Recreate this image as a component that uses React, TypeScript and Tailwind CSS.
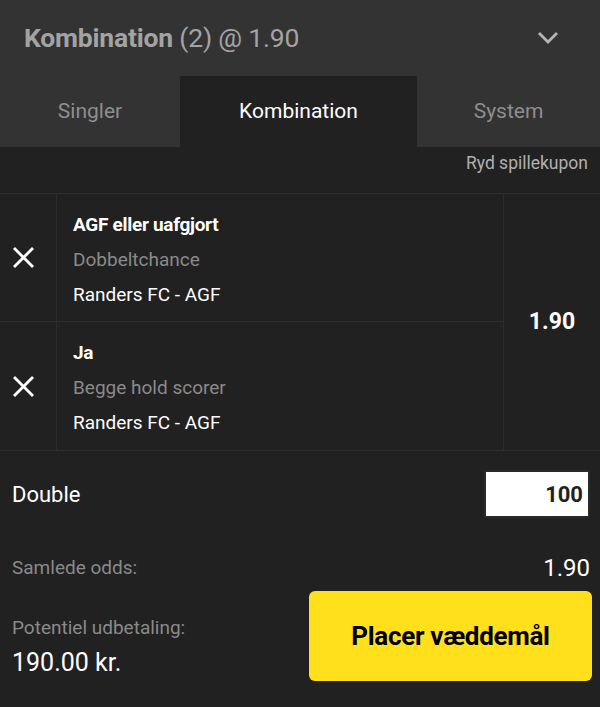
type Leg = {
  pick: string;
  market: string;
  event: string;
};

const legs: Leg[] = [
  {pick: "AGF eller uafgjort", market: "Dobbeltchance", event: "Randers FC - AGF"},
  {pick: "Ja", market: "Begge hold scorer", event: "Randers FC - AGF"},
];

function CloseIcon() {
  return (
    <svg width="23" height="23" viewBox="0 0 23 23" fill="none" stroke="#ffffff" strokeWidth="2.8">
      <line x1="2" y1="2" x2="21" y2="21" />
      <line x1="21" y1="2" x2="2" y2="21" />
    </svg>
  );
}

function LegRow({leg, last}: {leg: Leg; last: boolean}) {
  return (
    <div className={`flex h-[128px] ${last ? "" : "border-b border-[#2d2d2d]"}`}>
      <div className="w-[57px] flex items-center justify-center pr-[9px] border-r border-[#2d2d2d]">
        <CloseIcon />
      </div>
      <div className="flex-1 pl-4 pt-[3px] flex flex-col justify-center text-[19px] leading-[35px]">
        <div className="font-bold text-white tracking-[-0.3px]">{leg.pick}</div>
        <div className="text-[#8a8a8a]">{leg.market}</div>
        <div className="text-white">{leg.event}</div>
      </div>
    </div>
  );
}

export default function App() {
  return (
    <div
      className="w-[600px] h-[707px] bg-[#212121] overflow-hidden"
      style={{fontFamily: "Roboto, 'Liberation Sans', sans-serif"}}
    >
      <div className="bg-[#333333]">
        <div className="h-[76px] pl-6 pr-[41px] flex items-center justify-between">
          <div className="text-[26.5px] text-[#a3a3a3] tracking-[-0.2px]">
            <span className="font-bold">Kombination</span> (2) @ 1.90
          </div>
          <svg width="22" height="14" viewBox="0 0 22 14" fill="none" stroke="#b5b5b5" strokeWidth="2.8">
            <polyline points="2,2 11,11 20,2" />
          </svg>
        </div>
        <div className="flex h-[71px] text-[21px]">
          <div className="w-[180px] flex items-center justify-center text-[#8e8e8e]">Singler</div>
          <div className="w-[237px] flex items-center justify-center bg-[#212121] text-white">
            Kombination
          </div>
          <div className="flex-1 flex items-center justify-center text-[#8e8e8e]">System</div>
        </div>
      </div>

      <div className="h-[47px] pr-3 pt-[3px] flex justify-end border-b border-[#2d2d2d]">
        <span className="text-[17.5px] text-[#b0b0b0]">Ryd spillekupon</span>
      </div>

      <div className="flex border-b border-[#2d2d2d]">
        <div className="flex-1">
          {legs.map((leg, i) => (
            <LegRow key={i} leg={leg} last={i === legs.length - 1} />
          ))}
        </div>
        <div className="w-[97px] border-l border-[#2d2d2d] flex items-center justify-center">
          <span className="text-[23px] font-bold text-white">1.90</span>
        </div>
      </div>

      <div className="px-3 pt-[21px]">
        <div className="flex items-center justify-between h-[44px]">
          <span className="text-[22px] text-white">Double</span>
          <div className="w-[102px] h-[44px] bg-white outline-2 outline-[#2a2a2a] flex items-center justify-end pr-[5px]">
            <span className="text-[22px] font-bold text-[#212121]">100</span>
          </div>
        </div>

        <div className="mt-[37px] flex items-center justify-between h-[30px]">
          <span className="text-[19px] text-[#8a8a8a]">Samlede odds:</span>
          <span className="text-[24px] text-white -mr-[2px]">1.90</span>
        </div>

        <div className="mt-2 flex justify-between items-start">
          <div className="pt-[25px]">
            <div className="text-[19px] leading-[24px] text-[#8a8a8a]">Potentiel udbetaling:</div>
            <div className="mt-2 text-[25px] leading-[30px] text-white">190.00 kr.</div>
          </div>
          <button className="w-[283px] h-[90px] -mr-1 rounded-md bg-[#ffe01b] text-black text-[26px] font-bold tracking-[-0.3px]">
            Placer væddemål
          </button>
        </div>
      </div>
    </div>
  );
}
